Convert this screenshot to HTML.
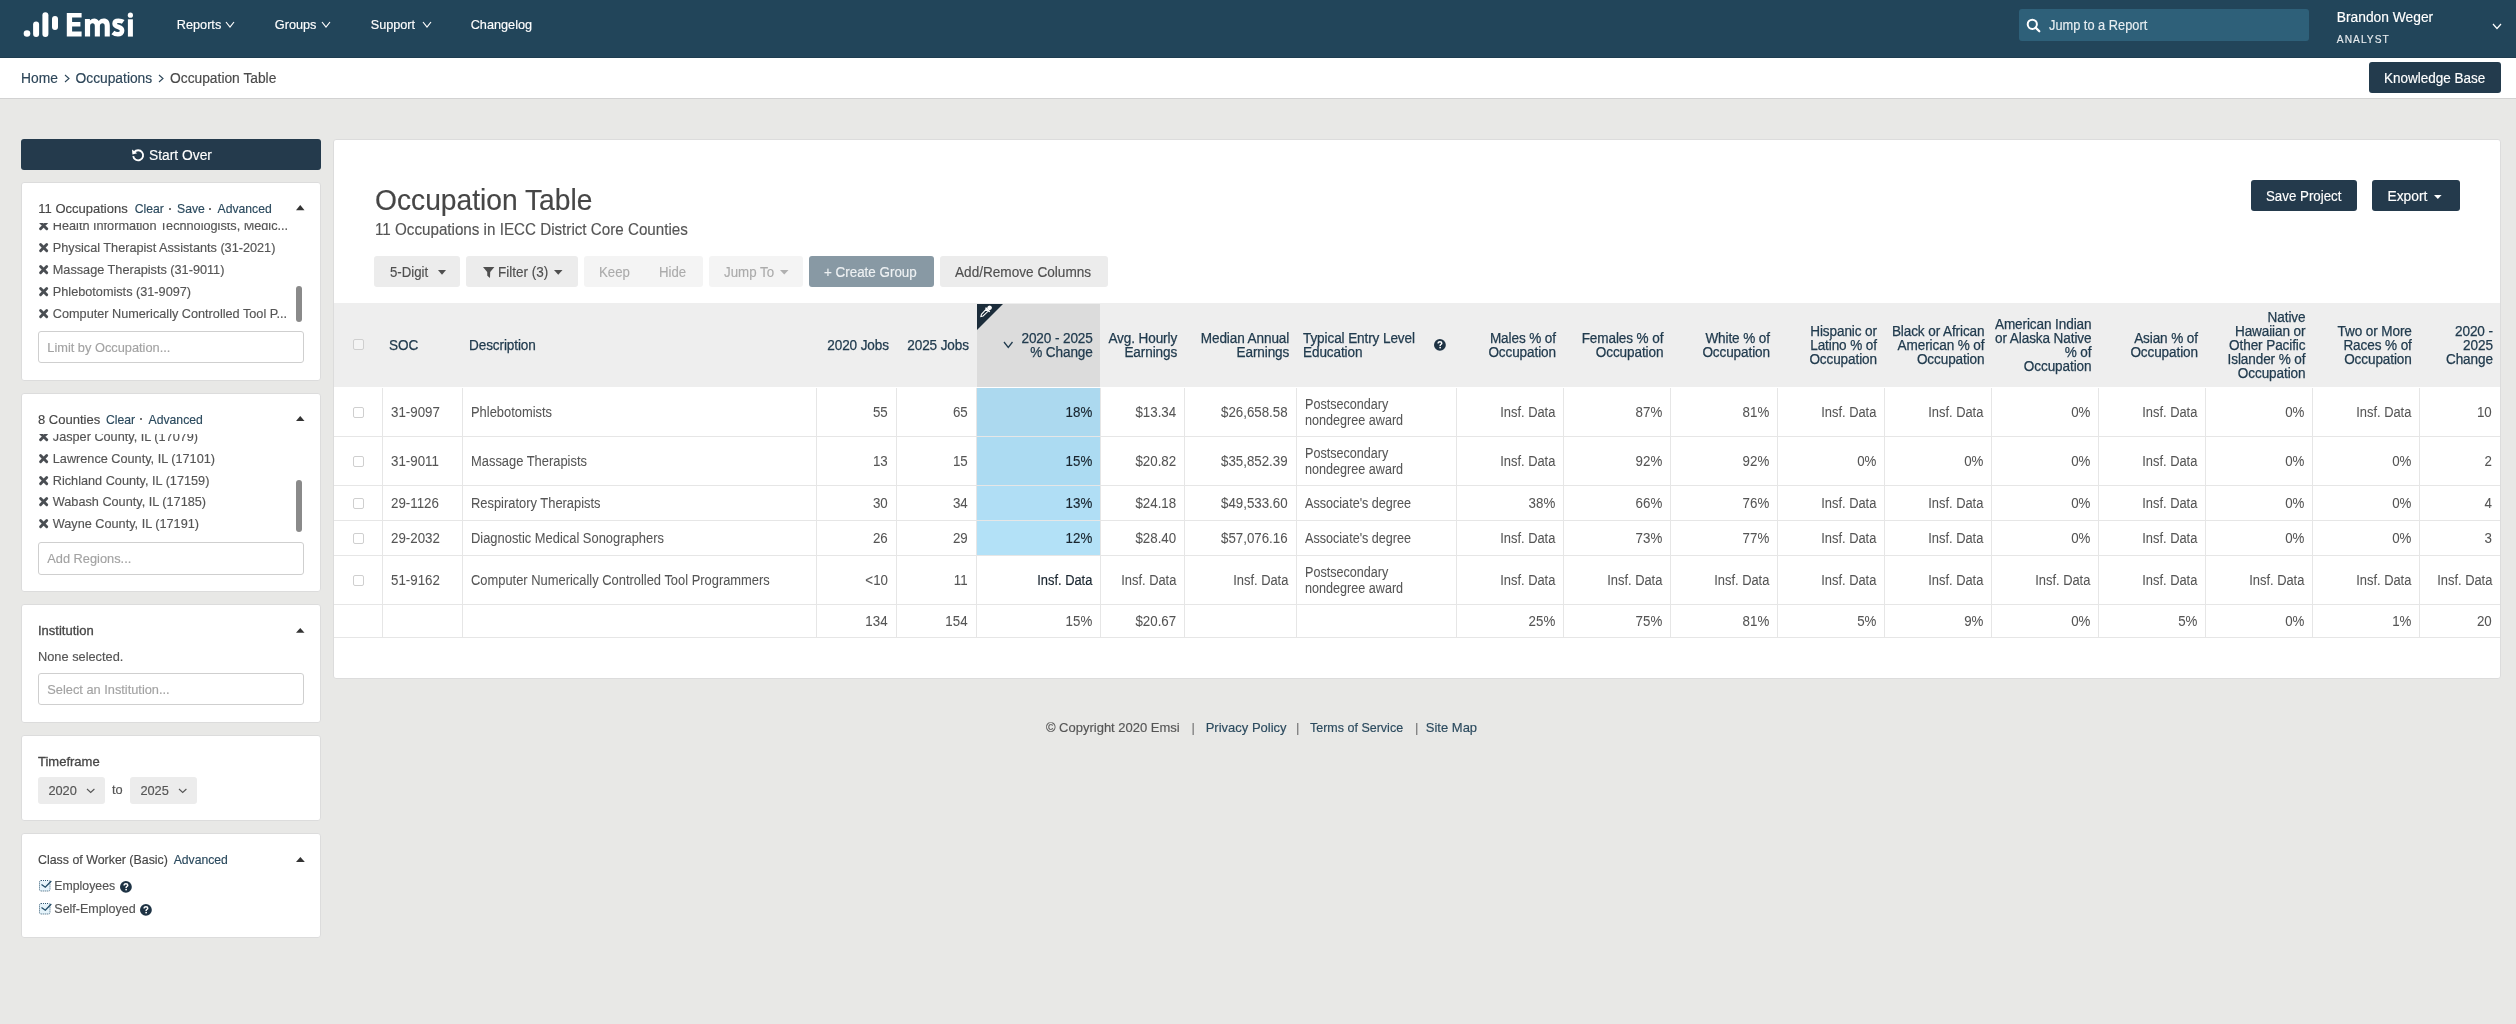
<!DOCTYPE html>
<html><head><meta charset="utf-8"><title>Occupation Table</title>
<style>
html,body{margin:0;padding:0}
body{width:2516px;height:1024px;overflow:hidden;position:relative;background:#e8e8e6;font-family:"Liberation Sans", sans-serif;-webkit-font-smoothing:antialiased}
#wrap{position:absolute;left:0;top:0;width:2516px;height:1024px;will-change:transform}
.t{position:absolute;white-space:pre;-webkit-text-stroke:0.15px currentColor}
.t br{}
.r{position:absolute;}
svg.r{overflow:visible}
</style></head><body>
<div id="wrap">
<div class="r" style="left:0px;top:0px;width:2516px;height:57px;background:#22455a"></div>
<div class="r" style="left:0px;top:57px;width:2516px;height:1px;background:#1e3d50"></div>
<svg class="r" style="left:20px;top:8px" width="120" height="34"><circle cx="7" cy="25.5" r="3.3" fill="#fff"/><rect x="13.1" y="13.5" width="6" height="15.4" rx="3" fill="#fff"/><rect x="22.4" y="4.2" width="6" height="24.7" rx="3" fill="#fff"/><rect x="32" y="8.1" width="6" height="13.8" rx="3" fill="#fff"/></svg>
<svg class="r" style="left:0px;top:0px" width="140" height="45"><path d="M66.8,13 H81.6 V17.6 H72.1 V22.1 H80.4 V26.6 H72.1 V31.4 H81.6 V36.6 H66.8 Z" fill="#fff"/><path d="M84.9,36.6 V18.9 H89.9 V20.6 C91,19.3 92.5,18.6 94.3,18.6 C96.3,18.6 97.8,19.5 98.7,21.1 C99.9,19.4 101.6,18.6 103.7,18.6 C107.6,18.6 109.8,21.1 109.8,25.4 V36.6 H104.7 V26 C104.7,24.2 103.9,23.3 102.5,23.3 C101,23.3 99.9,24.3 99.9,26.1 V36.6 H94.8 V26 C94.8,24.2 94,23.3 92.6,23.3 C91.1,23.3 90.1,24.3 90.1,26.1 V36.6 Z" fill="#fff"/><path d="M123.2,21.9 C121.8,20.9 120.2,20.8 118.4,20.8 C116,20.8 114.6,22 114.6,23.7 C114.6,25.6 116.3,26.3 118.5,27 C121,27.8 122.1,28.9 122.1,30.8 C122.1,33 120.3,34.3 117.9,34.3 C116,34.3 114.3,33.7 112.9,32.5" fill="none" stroke="#fff" stroke-width="4.6"/><rect x="127.9" y="19.3" width="5" height="17.3" fill="#fff"/><circle cx="130.4" cy="15.2" r="2.6" fill="#fff"/></svg>
<div class="t" style="left:176.80px;top:19.00px;font-size:12.7px;line-height:12.7px;color:#ffffff;font-weight:normal;">Reports</div>
<svg class="r" style="left:225px;top:21px" width="10" height="7"><polyline points="1,1 5.0,6 9,1" fill="none" stroke="#fff" stroke-width="1.2"/></svg>
<div class="t" style="left:274.80px;top:19.00px;font-size:12.7px;line-height:12.7px;color:#ffffff;font-weight:normal;">Groups</div>
<svg class="r" style="left:321.4px;top:21px" width="10.0" height="7"><polyline points="1,1 5.0,6 9.0,1" fill="none" stroke="#fff" stroke-width="1.2"/></svg>
<div class="t" style="left:370.70px;top:19.00px;font-size:12.7px;line-height:12.7px;color:#ffffff;font-weight:normal;">Support</div>
<svg class="r" style="left:422px;top:21px" width="10" height="7"><polyline points="1,1 5.0,6 9,1" fill="none" stroke="#fff" stroke-width="1.2"/></svg>
<div class="t" style="left:470.70px;top:19.00px;font-size:12.7px;line-height:12.7px;color:#ffffff;font-weight:normal;">Changelog</div>
<div class="r" style="left:2019px;top:9px;width:290px;height:32px;background:#2e6079;border-radius:3px"></div>
<svg class="r" style="left:2026px;top:18px" width="16" height="16"><circle cx="6.3" cy="6.3" r="4.6" fill="none" stroke="#fff" stroke-width="2"/><line x1="9.6" y1="9.6" x2="13.3" y2="13.3" stroke="#fff" stroke-width="2.2" stroke-linecap="round"/></svg>
<div class="t" style="left:2048.80px;top:19.00px;font-size:13.97px;line-height:13.97px;color:#e8eef2;font-weight:normal;;transform:scaleX(0.9165);transform-origin:left top">Jump to a Report</div>
<div class="t" style="left:2336.80px;top:11.00px;font-size:13.8px;line-height:13.8px;color:#ffffff;font-weight:normal;">Brandon Weger</div>
<div class="t" style="left:2336.80px;top:35.00px;font-size:10.2px;line-height:10.2px;color:#e6ebee;font-weight:normal;letter-spacing:1.05px">ANALYST</div>
<svg class="r" style="left:2492px;top:22.5px" width="10" height="6.5"><polyline points="1,1 5.0,5.5 9,1" fill="none" stroke="#fff" stroke-width="1.2"/></svg>
<div class="r" style="left:0px;top:58px;width:2516px;height:40px;background:#fff"></div>
<div class="r" style="left:0px;top:98px;width:2516px;height:1px;background:#d2d2d2"></div>
<div class="t" style="left:21.00px;top:72.00px;font-size:13.8px;line-height:13.8px;color:#2d4659;font-weight:normal;">Home</div>
<svg class="r" style="left:63.5px;top:73.5px" width="6.0" height="9.0"><polyline points="1,1 5.0,4.5 1,8.0" fill="none" stroke="#2d4659" stroke-width="1.1"/></svg>
<div class="t" style="left:75.50px;top:72.00px;font-size:13.8px;line-height:13.8px;color:#2d4659;font-weight:normal;">Occupations</div>
<svg class="r" style="left:158px;top:73.5px" width="6" height="9.0"><polyline points="1,1 5,4.5 1,8.0" fill="none" stroke="#2d4659" stroke-width="1.1"/></svg>
<div class="t" style="left:170.00px;top:72.00px;font-size:13.8px;line-height:13.8px;color:#4a4a4a;font-weight:normal;">Occupation Table</div>
<div class="r" style="left:2369px;top:62px;width:132px;height:31px;background:#233b4d;border-radius:3px"></div>
<div class="t" style="left:2384.00px;top:71.00px;font-size:14.39px;line-height:14.39px;color:#ffffff;font-weight:normal;;transform:scaleX(0.9384);transform-origin:left top">Knowledge Base</div>
<div class="r" style="left:21px;top:139px;width:300px;height:31px;background:#243a4c;border-radius:3px"></div>
<svg class="r" style="left:131px;top:148px" width="14" height="14" viewBox="0 0 14 14"><path d="M3.2,4.2 A5,5 0 1 1 2.2,8.2" fill="none" stroke="#fff" stroke-width="1.9"/><polygon points="1,1.6 6.2,5.2 1.4,6.6" fill="#fff"/></svg>
<div class="t" style="left:148.50px;top:148.00px;font-size:14.25px;line-height:14.25px;color:#ffffff;font-weight:normal;;transform:scaleX(0.9687);transform-origin:left top">Start Over</div>
<div class="r" style="left:21px;top:182px;width:300px;height:199px;background:#fff;border:1px solid #dcdcdc;border-radius:3px;box-sizing:border-box"></div>
<div class="t" style="left:38.30px;top:202.00px;font-size:13px;line-height:13px;color:#464646;font-weight:normal;">11 Occupations</div>
<div class="t" style="left:134.80px;top:203.00px;font-size:12.2px;line-height:12.2px;color:#2b4a5e;font-weight:normal;">Clear</div>
<div class="r" style="left:169px;top:207.5px;width:2px;height:2.0px;background:#444;border-radius:1px"></div>
<div class="t" style="left:177.00px;top:203.00px;font-size:12.2px;line-height:12.2px;color:#2b4a5e;font-weight:normal;">Save</div>
<div class="r" style="left:209px;top:207.5px;width:2px;height:2.0px;background:#444;border-radius:1px"></div>
<div class="t" style="left:217.50px;top:203.00px;font-size:12.2px;line-height:12.2px;color:#2b4a5e;font-weight:normal;">Advanced</div>
<svg class="r" style="left:295.5px;top:205.3px" width="8.5" height="5.199999999999989"><polygon points="0,5.199999999999989 4.25,0 8.5,5.199999999999989" fill="#333"/></svg>
<div class="r" style="left:22px;top:223px;width:298px;height:100px;overflow:hidden">
<svg class="r" style="left:17px;top:-2.1999999999999993px" width="9.3" height="9.3" viewBox="0 0 10 10"><path d="M1.7,1.7 L8.3,8.3 M8.3,1.7 L1.7,8.3" stroke="#4a4e53" stroke-width="3.1" stroke-linecap="round"/></svg>
<div class="t" style="left:30.80px;top:-3.00px;font-size:12.7px;line-height:12.7px;color:#555;font-weight:normal;">Health Information Technologists, Medic...</div>
<svg class="r" style="left:17px;top:19.8px" width="9.3" height="9.3" viewBox="0 0 10 10"><path d="M1.7,1.7 L8.3,8.3 M8.3,1.7 L1.7,8.3" stroke="#4a4e53" stroke-width="3.1" stroke-linecap="round"/></svg>
<div class="t" style="left:30.80px;top:19.00px;font-size:12.7px;line-height:12.7px;color:#555;font-weight:normal;">Physical Therapist Assistants (31-2021)</div>
<svg class="r" style="left:17px;top:41.8px" width="9.3" height="9.3" viewBox="0 0 10 10"><path d="M1.7,1.7 L8.3,8.3 M8.3,1.7 L1.7,8.3" stroke="#4a4e53" stroke-width="3.1" stroke-linecap="round"/></svg>
<div class="t" style="left:30.80px;top:41.00px;font-size:12.7px;line-height:12.7px;color:#555;font-weight:normal;">Massage Therapists (31-9011)</div>
<svg class="r" style="left:17px;top:63.8px" width="9.3" height="9.3" viewBox="0 0 10 10"><path d="M1.7,1.7 L8.3,8.3 M8.3,1.7 L1.7,8.3" stroke="#4a4e53" stroke-width="3.1" stroke-linecap="round"/></svg>
<div class="t" style="left:30.80px;top:63.00px;font-size:12.7px;line-height:12.7px;color:#555;font-weight:normal;">Phlebotomists (31-9097)</div>
<svg class="r" style="left:17px;top:85.8px" width="9.3" height="9.3" viewBox="0 0 10 10"><path d="M1.7,1.7 L8.3,8.3 M8.3,1.7 L1.7,8.3" stroke="#4a4e53" stroke-width="3.1" stroke-linecap="round"/></svg>
<div class="t" style="left:30.80px;top:85.00px;font-size:12.7px;line-height:12.7px;color:#555;font-weight:normal;">Computer Numerically Controlled Tool P...</div>
</div>
<div class="r" style="left:295.5px;top:285.5px;width:6.5px;height:36.10000000000002px;background:#8a8a8a;border-radius:3px"></div>
<div class="r" style="left:38px;top:330.6px;width:266px;height:32.799999999999955px;background:#fff;border:1px solid #cfcfcf;border-radius:3px;box-sizing:border-box"></div>
<div class="t" style="left:47.30px;top:342.00px;font-size:12.8px;line-height:12.8px;color:#a3a3a3;font-weight:normal;">Limit by Occupation...</div>
<div class="r" style="left:21px;top:393px;width:300px;height:199px;background:#fff;border:1px solid #dcdcdc;border-radius:3px;box-sizing:border-box"></div>
<div class="t" style="left:38.00px;top:413.00px;font-size:13px;line-height:13px;color:#464646;font-weight:normal;">8 Counties</div>
<div class="t" style="left:106.00px;top:414.00px;font-size:12.2px;line-height:12.2px;color:#2b4a5e;font-weight:normal;">Clear</div>
<div class="r" style="left:140px;top:418px;width:2px;height:2px;background:#444;border-radius:1px"></div>
<div class="t" style="left:148.60px;top:414.00px;font-size:12.2px;line-height:12.2px;color:#2b4a5e;font-weight:normal;">Advanced</div>
<svg class="r" style="left:295.5px;top:416.4px" width="8.5" height="5.100000000000023"><polygon points="0,5.100000000000023 4.25,0 8.5,5.100000000000023" fill="#333"/></svg>
<div class="r" style="left:22px;top:434px;width:298px;height:100px;overflow:hidden">
<svg class="r" style="left:17px;top:-2.1999999999999993px" width="9.3" height="9.3" viewBox="0 0 10 10"><path d="M1.7,1.7 L8.3,8.3 M8.3,1.7 L1.7,8.3" stroke="#4a4e53" stroke-width="3.1" stroke-linecap="round"/></svg>
<div class="t" style="left:30.80px;top:-3.00px;font-size:12.7px;line-height:12.7px;color:#555;font-weight:normal;">Jasper County, IL (17079)</div>
<svg class="r" style="left:17px;top:19.8px" width="9.3" height="9.3" viewBox="0 0 10 10"><path d="M1.7,1.7 L8.3,8.3 M8.3,1.7 L1.7,8.3" stroke="#4a4e53" stroke-width="3.1" stroke-linecap="round"/></svg>
<div class="t" style="left:30.80px;top:19.00px;font-size:12.7px;line-height:12.7px;color:#555;font-weight:normal;">Lawrence County, IL (17101)</div>
<svg class="r" style="left:17px;top:41.8px" width="9.3" height="9.3" viewBox="0 0 10 10"><path d="M1.7,1.7 L8.3,8.3 M8.3,1.7 L1.7,8.3" stroke="#4a4e53" stroke-width="3.1" stroke-linecap="round"/></svg>
<div class="t" style="left:30.80px;top:41.00px;font-size:12.7px;line-height:12.7px;color:#555;font-weight:normal;">Richland County, IL (17159)</div>
<svg class="r" style="left:17px;top:62.8px" width="9.3" height="9.3" viewBox="0 0 10 10"><path d="M1.7,1.7 L8.3,8.3 M8.3,1.7 L1.7,8.3" stroke="#4a4e53" stroke-width="3.1" stroke-linecap="round"/></svg>
<div class="t" style="left:30.80px;top:62.00px;font-size:12.7px;line-height:12.7px;color:#555;font-weight:normal;">Wabash County, IL (17185)</div>
<svg class="r" style="left:17px;top:84.8px" width="9.3" height="9.3" viewBox="0 0 10 10"><path d="M1.7,1.7 L8.3,8.3 M8.3,1.7 L1.7,8.3" stroke="#4a4e53" stroke-width="3.1" stroke-linecap="round"/></svg>
<div class="t" style="left:30.80px;top:84.00px;font-size:12.7px;line-height:12.7px;color:#555;font-weight:normal;">Wayne County, IL (17191)</div>
</div>
<div class="r" style="left:295.5px;top:480px;width:6.5px;height:52.39999999999998px;background:#8a8a8a;border-radius:3px"></div>
<div class="r" style="left:38px;top:541.5px;width:266px;height:33.200000000000045px;background:#fff;border:1px solid #cfcfcf;border-radius:3px;box-sizing:border-box"></div>
<div class="t" style="left:47.30px;top:553.00px;font-size:12.8px;line-height:12.8px;color:#a3a3a3;font-weight:normal;">Add Regions...</div>
<div class="r" style="left:21px;top:604px;width:300px;height:119px;background:#fff;border:1px solid #dcdcdc;border-radius:3px;box-sizing:border-box"></div>
<div class="t" style="left:38.00px;top:624.00px;font-size:13px;line-height:13px;color:#464646;font-weight:normal;-webkit-text-stroke:0.3px #464646">Institution</div>
<svg class="r" style="left:295.5px;top:627.8px" width="8.5" height="4.800000000000068"><polygon points="0,4.800000000000068 4.25,0 8.5,4.800000000000068" fill="#333"/></svg>
<div class="t" style="left:38.00px;top:651.00px;font-size:12.8px;line-height:12.8px;color:#555;font-weight:normal;">None selected.</div>
<div class="r" style="left:38px;top:672.6px;width:266px;height:32.60000000000002px;background:#fff;border:1px solid #cfcfcf;border-radius:3px;box-sizing:border-box"></div>
<div class="t" style="left:47.30px;top:684.00px;font-size:12.8px;line-height:12.8px;color:#a3a3a3;font-weight:normal;">Select an Institution...</div>
<div class="r" style="left:21px;top:735px;width:300px;height:86px;background:#fff;border:1px solid #dcdcdc;border-radius:3px;box-sizing:border-box"></div>
<div class="t" style="left:38.00px;top:755.00px;font-size:13px;line-height:13px;color:#464646;font-weight:normal;-webkit-text-stroke:0.3px #464646">Timeframe</div>
<div class="r" style="left:38px;top:777px;width:67px;height:27px;background:#ececec;border-radius:3px"></div>
<div class="t" style="left:48.40px;top:785.00px;font-size:12.8px;line-height:12.8px;color:#555;font-weight:normal;">2020</div>
<svg class="r" style="left:86px;top:787.5px" width="9.400000000000006" height="5.5"><polyline points="1,1 4.700000000000003,4.5 8.400000000000006,1" fill="none" stroke="#555" stroke-width="1.1"/></svg>
<div class="t" style="left:112.00px;top:784.00px;font-size:12.8px;line-height:12.8px;color:#555;font-weight:normal;">to</div>
<div class="r" style="left:130px;top:777px;width:67px;height:27px;background:#ececec;border-radius:3px"></div>
<div class="t" style="left:140.40px;top:785.00px;font-size:12.8px;line-height:12.8px;color:#555;font-weight:normal;">2025</div>
<svg class="r" style="left:178px;top:787.5px" width="9.400000000000006" height="5.5"><polyline points="1,1 4.700000000000003,4.5 8.400000000000006,1" fill="none" stroke="#555" stroke-width="1.1"/></svg>
<div class="r" style="left:21px;top:833px;width:300px;height:105px;background:#fff;border:1px solid #dcdcdc;border-radius:3px;box-sizing:border-box"></div>
<div class="t" style="left:38.00px;top:854.00px;font-size:12.4px;line-height:12.4px;color:#464646;font-weight:normal;">Class of Worker (Basic)</div>
<div class="t" style="left:173.70px;top:854.00px;font-size:12.2px;line-height:12.2px;color:#2b4a5e;font-weight:normal;">Advanced</div>
<svg class="r" style="left:295.5px;top:856.6px" width="8.800000000000011" height="4.899999999999977"><polygon points="0,4.899999999999977 4.400000000000006,0 8.800000000000011,4.899999999999977" fill="#333"/></svg>
<svg class="r" style="left:39px;top:880px" width="13" height="12" viewBox="0 0 13 12"><rect x="0.5" y="0.5" width="10.5" height="10.5" rx="1.5" fill="#e6f4fb" stroke="#1f4a66" stroke-width="0.9" stroke-dasharray="1,1"/><polyline points="2.5,4.5 6.3,7.2 12.3,1" fill="none" stroke="#1f4a66" stroke-width="1.3"/></svg>
<div class="t" style="left:54.30px;top:880.00px;font-size:12.3px;line-height:12.3px;color:#555;font-weight:normal;">Employees</div>
<svg class="r" style="left:119.7px;top:881px" width="11.8" height="11.8" viewBox="0 0 12 12"><circle cx="6" cy="6" r="6" fill="#1e3344"/><path d="M4.2,4.6 C4.2,3.3 5,2.7 6.1,2.7 C7.2,2.7 7.9,3.4 7.9,4.3 C7.9,5.4 6.6,5.6 6.3,6.3 L6.3,7" fill="none" stroke="#fff" stroke-width="1.5"/><rect x="5.45" y="8" width="1.6" height="1.5" fill="#fff"/></svg>
<svg class="r" style="left:39px;top:903px" width="13" height="12" viewBox="0 0 13 12"><rect x="0.5" y="0.5" width="10.5" height="10.5" rx="1.5" fill="#e6f4fb" stroke="#1f4a66" stroke-width="0.9" stroke-dasharray="1,1"/><polyline points="2.5,4.5 6.3,7.2 12.3,1" fill="none" stroke="#1f4a66" stroke-width="1.3"/></svg>
<div class="t" style="left:54.30px;top:903.00px;font-size:12.5px;line-height:12.5px;color:#555;font-weight:normal;">Self-Employed</div>
<svg class="r" style="left:140.4px;top:904px" width="11.8" height="11.8" viewBox="0 0 12 12"><circle cx="6" cy="6" r="6" fill="#1e3344"/><path d="M4.2,4.6 C4.2,3.3 5,2.7 6.1,2.7 C7.2,2.7 7.9,3.4 7.9,4.3 C7.9,5.4 6.6,5.6 6.3,6.3 L6.3,7" fill="none" stroke="#fff" stroke-width="1.5"/><rect x="5.45" y="8" width="1.6" height="1.5" fill="#fff"/></svg>
<div class="r" style="left:333px;top:139px;width:2168px;height:540px;background:#fff;border:1px solid #dcdcdc;border-radius:3px;box-sizing:border-box"></div>
<div class="t" style="left:374.50px;top:185.00px;font-size:29.75px;line-height:29.75px;color:#464646;font-weight:normal;;transform:scaleX(0.9479);transform-origin:left top">Occupation Table</div>
<div class="t" style="left:374.50px;top:221.00px;font-size:16.2px;line-height:16.2px;color:#555;font-weight:normal;;transform:scaleX(0.9382);transform-origin:left top">11 Occupations in IECC District Core Counties</div>
<div class="r" style="left:374px;top:256px;width:86px;height:31px;background:#ececec;border-radius:3px"></div>
<div class="t" style="left:389.50px;top:266.00px;font-size:13.97px;line-height:13.97px;color:#4f4f4f;font-weight:normal;;transform:scaleX(0.9451);transform-origin:left top">5-Digit</div>
<svg class="r" style="left:437.5px;top:270px" width="8.0" height="4.800000000000011"><polygon points="0,0 4.0,4.800000000000011 8.0,0" fill="#4f4f4f"/></svg>
<div class="r" style="left:466px;top:256px;width:112px;height:31px;background:#ececec;border-radius:3px"></div>
<svg class="r" style="left:483px;top:267px" width="12" height="11" viewBox="0 0 12 11"><polygon points="0,0 11.4,0 7.2,5 7,11 4.3,8.8 4.2,5" fill="#4f4f4f"/></svg>
<div class="t" style="left:497.90px;top:266.00px;font-size:13.97px;line-height:13.97px;color:#4f4f4f;font-weight:normal;;transform:scaleX(0.9666);transform-origin:left top">Filter (3)</div>
<svg class="r" style="left:554px;top:270px" width="8.5" height="4.800000000000011"><polygon points="0,0 4.25,4.800000000000011 8.5,0" fill="#4f4f4f"/></svg>
<div class="r" style="left:584px;top:256px;width:119px;height:31px;background:#f4f4f4;border-radius:3px"></div>
<div class="t" style="left:598.70px;top:266.00px;font-size:13.97px;line-height:13.97px;color:#ababab;font-weight:normal;;transform:scaleX(0.9451);transform-origin:left top">Keep</div>
<div class="t" style="left:659.00px;top:266.00px;font-size:13.97px;line-height:13.97px;color:#ababab;font-weight:normal;;transform:scaleX(0.9451);transform-origin:left top">Hide</div>
<div class="r" style="left:709px;top:256px;width:94px;height:31px;background:#f4f4f4;border-radius:3px"></div>
<div class="t" style="left:723.60px;top:266.00px;font-size:13.97px;line-height:13.97px;color:#ababab;font-weight:normal;;transform:scaleX(0.9523);transform-origin:left top">Jump To</div>
<svg class="r" style="left:780px;top:270px" width="8.5" height="4.5"><polygon points="0,0 4.25,4.5 8.5,0" fill="#b0b0b0"/></svg>
<div class="r" style="left:809px;top:256px;width:125px;height:31px;background:#8899a4;border-radius:3px"></div>
<div class="t" style="left:824.40px;top:266.00px;font-size:13.97px;line-height:13.97px;color:#eef1f3;font-weight:normal;;transform:scaleX(0.9594);transform-origin:left top">+ Create Group</div>
<div class="r" style="left:940px;top:256px;width:168px;height:31px;background:#ececec;border-radius:3px"></div>
<div class="t" style="left:954.80px;top:266.00px;font-size:13.97px;line-height:13.97px;color:#4f4f4f;font-weight:normal;;transform:scaleX(0.9738);transform-origin:left top">Add/Remove Columns</div>
<div class="r" style="left:2251px;top:180px;width:106px;height:31px;background:#243a4c;border-radius:3px"></div>
<div class="t" style="left:2266.40px;top:190.00px;font-size:13.97px;line-height:13.97px;color:#ffffff;font-weight:normal;;transform:scaleX(0.9523);transform-origin:left top">Save Project</div>
<div class="r" style="left:2372px;top:180px;width:88px;height:31px;background:#243a4c;border-radius:3px"></div>
<div class="t" style="left:2387.50px;top:190.00px;font-size:13.8px;line-height:13.8px;color:#ffffff;font-weight:normal;">Export</div>
<svg class="r" style="left:2433.6px;top:194.5px" width="7.599999999999909" height="4.0"><polygon points="0,0 3.7999999999999545,4.0 7.599999999999909,0" fill="#fff"/></svg>
<div class="r" style="left:334px;top:303px;width:2166px;height:84px;background:#eeeeee"></div>
<div class="r" style="left:977px;top:304px;width:123px;height:83px;background:#dcdcdc"></div>
<svg class="r" style="left:977px;top:304px" width="26" height="26" viewBox="0 0 26 26"><polygon points="0,0 26,0 0,26" fill="#1b2c3a"/><g transform="translate(8.8,7.6) rotate(45)"><rect x="-2.2" y="-7.6" width="4.4" height="4.6" rx="2" fill="#fff"/><rect x="-3" y="-3.4" width="6" height="1.6" rx="0.5" fill="#fff"/><path d="M-1.4,-1.8 L1.4,-1.8 L1.2,5 L0,7 L-1.2,5 Z" fill="none" stroke="#fff" stroke-width="1"/></g></svg>
<div class="r" style="left:353px;top:339px;width:11px;height:11px;border:1px solid #cfcfcf;border-radius:2px;background:#f4f4f4;box-sizing:border-box"></div>
<div class="t" style="left:389.00px;top:338.00px;font-size:13.83px;line-height:14px;color:#213b4e;font-weight:normal;-webkit-text-stroke:0.25px #213b4e;letter-spacing:-0.1px;transform:scaleX(0.9800);transform-origin:left top">SOC</div>
<div class="t" style="left:469.00px;top:338.00px;font-size:13.83px;line-height:14px;color:#213b4e;font-weight:normal;-webkit-text-stroke:0.25px #213b4e;letter-spacing:-0.1px;transform:scaleX(0.9800);transform-origin:left top">Description</div>
<div class="t" style="right:1627.00px;text-align:right;top:338.00px;font-size:13.83px;line-height:14px;color:#213b4e;font-weight:normal;-webkit-text-stroke:0.25px #213b4e;letter-spacing:-0.1px;transform:scaleX(0.9800);transform-origin:right top">2020 Jobs</div>
<div class="t" style="right:1547.00px;text-align:right;top:338.00px;font-size:13.83px;line-height:14px;color:#213b4e;font-weight:normal;-webkit-text-stroke:0.25px #213b4e;letter-spacing:-0.1px;transform:scaleX(0.9800);transform-origin:right top">2025 Jobs</div>
<div class="t" style="right:1423.00px;text-align:right;top:331.00px;font-size:13.83px;line-height:14px;color:#213b4e;font-weight:normal;-webkit-text-stroke:0.25px #213b4e;letter-spacing:-0.1px;transform:scaleX(0.9800);transform-origin:right top">2020 - 2025<br>% Change</div>
<svg class="r" style="left:1003px;top:341px" width="10.5" height="7.5"><polyline points="1,1 5.25,6.5 9.5,1" fill="none" stroke="#213b4e" stroke-width="1.3"/></svg>
<div class="t" style="right:1339.00px;text-align:right;top:331.00px;font-size:13.83px;line-height:14px;color:#213b4e;font-weight:normal;-webkit-text-stroke:0.25px #213b4e;letter-spacing:-0.1px;transform:scaleX(0.9800);transform-origin:right top">Avg. Hourly<br>Earnings</div>
<div class="t" style="right:1227.00px;text-align:right;top:331.00px;font-size:13.83px;line-height:14px;color:#213b4e;font-weight:normal;-webkit-text-stroke:0.25px #213b4e;letter-spacing:-0.1px;transform:scaleX(0.9800);transform-origin:right top">Median Annual<br>Earnings</div>
<div class="t" style="left:1303.00px;top:331.00px;font-size:13.83px;line-height:14px;color:#213b4e;font-weight:normal;-webkit-text-stroke:0.25px #213b4e;letter-spacing:-0.1px;transform:scaleX(0.9800);transform-origin:left top">Typical Entry Level<br>Education</div>
<svg class="r" style="left:1434px;top:339.4px" width="11.8" height="11.8" viewBox="0 0 12 12"><circle cx="6" cy="6" r="6" fill="#1e3344"/><path d="M4.2,4.6 C4.2,3.3 5,2.7 6.1,2.7 C7.2,2.7 7.9,3.4 7.9,4.3 C7.9,5.4 6.6,5.6 6.3,6.3 L6.3,7" fill="none" stroke="#fff" stroke-width="1.5"/><rect x="5.45" y="8" width="1.6" height="1.5" fill="#fff"/></svg>
<div class="t" style="right:960.00px;text-align:right;top:331.00px;font-size:13.83px;line-height:14px;color:#213b4e;font-weight:normal;-webkit-text-stroke:0.25px #213b4e;letter-spacing:-0.1px;transform:scaleX(0.9800);transform-origin:right top">Males % of<br>Occupation</div>
<div class="t" style="right:853.00px;text-align:right;top:331.00px;font-size:13.83px;line-height:14px;color:#213b4e;font-weight:normal;-webkit-text-stroke:0.25px #213b4e;letter-spacing:-0.1px;transform:scaleX(0.9800);transform-origin:right top">Females % of<br>Occupation</div>
<div class="t" style="right:746.00px;text-align:right;top:331.00px;font-size:13.83px;line-height:14px;color:#213b4e;font-weight:normal;-webkit-text-stroke:0.25px #213b4e;letter-spacing:-0.1px;transform:scaleX(0.9800);transform-origin:right top">White % of<br>Occupation</div>
<div class="t" style="right:639.00px;text-align:right;top:324.00px;font-size:13.83px;line-height:14px;color:#213b4e;font-weight:normal;-webkit-text-stroke:0.25px #213b4e;letter-spacing:-0.1px;transform:scaleX(0.9800);transform-origin:right top">Hispanic or<br>Latino % of<br>Occupation</div>
<div class="t" style="right:532.00px;text-align:right;top:324.00px;font-size:13.83px;line-height:14px;color:#213b4e;font-weight:normal;-webkit-text-stroke:0.25px #213b4e;letter-spacing:-0.1px;transform:scaleX(0.9800);transform-origin:right top">Black or African<br>American % of<br>Occupation</div>
<div class="t" style="right:425.00px;text-align:right;top:317.00px;font-size:13.83px;line-height:14px;color:#213b4e;font-weight:normal;-webkit-text-stroke:0.25px #213b4e;letter-spacing:-0.1px;transform:scaleX(0.9800);transform-origin:right top">American Indian<br>or Alaska Native<br>% of<br>Occupation</div>
<div class="t" style="right:318.00px;text-align:right;top:331.00px;font-size:13.83px;line-height:14px;color:#213b4e;font-weight:normal;-webkit-text-stroke:0.25px #213b4e;letter-spacing:-0.1px;transform:scaleX(0.9800);transform-origin:right top">Asian % of<br>Occupation</div>
<div class="t" style="right:211.00px;text-align:right;top:310.00px;font-size:13.83px;line-height:14px;color:#213b4e;font-weight:normal;-webkit-text-stroke:0.25px #213b4e;letter-spacing:-0.1px;transform:scaleX(0.9800);transform-origin:right top">Native<br>Hawaiian or<br>Other Pacific<br>Islander % of<br>Occupation</div>
<div class="t" style="right:104.00px;text-align:right;top:324.00px;font-size:13.83px;line-height:14px;color:#213b4e;font-weight:normal;-webkit-text-stroke:0.25px #213b4e;letter-spacing:-0.1px;transform:scaleX(0.9800);transform-origin:right top">Two or More<br>Races % of<br>Occupation</div>
<div class="t" style="right:23.00px;text-align:right;top:324.00px;font-size:13.83px;line-height:14px;color:#213b4e;font-weight:normal;-webkit-text-stroke:0.25px #213b4e;letter-spacing:-0.1px;transform:scaleX(0.9800);transform-origin:right top">2020 -<br>2025<br>Change</div>
<div class="r" style="left:334px;top:436px;width:2166px;height:1px;background:#e6e6e6"></div>
<div class="r" style="left:334px;top:485px;width:2166px;height:1px;background:#e6e6e6"></div>
<div class="r" style="left:334px;top:520px;width:2166px;height:1px;background:#e6e6e6"></div>
<div class="r" style="left:334px;top:555px;width:2166px;height:1px;background:#e6e6e6"></div>
<div class="r" style="left:334px;top:604px;width:2166px;height:1px;background:#e6e6e6"></div>
<div class="r" style="left:334px;top:637px;width:2166px;height:1px;background:#e6e6e6"></div>
<div class="r" style="left:334px;top:387px;width:2166px;height:1px;background:#fff"></div>
<div class="r" style="left:382px;top:388px;width:1px;height:249px;background:#e6e6e6"></div>
<div class="r" style="left:462px;top:388px;width:1px;height:249px;background:#e6e6e6"></div>
<div class="r" style="left:816px;top:388px;width:1px;height:249px;background:#e6e6e6"></div>
<div class="r" style="left:896px;top:388px;width:1px;height:249px;background:#e6e6e6"></div>
<div class="r" style="left:976px;top:388px;width:1px;height:249px;background:#e6e6e6"></div>
<div class="r" style="left:1100px;top:388px;width:1px;height:249px;background:#e6e6e6"></div>
<div class="r" style="left:1184px;top:388px;width:1px;height:249px;background:#e6e6e6"></div>
<div class="r" style="left:1296px;top:388px;width:1px;height:249px;background:#e6e6e6"></div>
<div class="r" style="left:1456px;top:388px;width:1px;height:249px;background:#e6e6e6"></div>
<div class="r" style="left:1563px;top:388px;width:1px;height:249px;background:#e6e6e6"></div>
<div class="r" style="left:1670px;top:388px;width:1px;height:249px;background:#e6e6e6"></div>
<div class="r" style="left:1777px;top:388px;width:1px;height:249px;background:#e6e6e6"></div>
<div class="r" style="left:1884px;top:388px;width:1px;height:249px;background:#e6e6e6"></div>
<div class="r" style="left:1991px;top:388px;width:1px;height:249px;background:#e6e6e6"></div>
<div class="r" style="left:2098px;top:388px;width:1px;height:249px;background:#e6e6e6"></div>
<div class="r" style="left:2205px;top:388px;width:1px;height:249px;background:#e6e6e6"></div>
<div class="r" style="left:2312px;top:388px;width:1px;height:249px;background:#e6e6e6"></div>
<div class="r" style="left:2419px;top:388px;width:1px;height:249px;background:#e6e6e6"></div>
<div class="r" style="left:977px;top:388px;width:123px;height:48px;background:#acd9ef"></div>
<div class="r" style="left:977px;top:437px;width:123px;height:48px;background:#acdbf2"></div>
<div class="r" style="left:977px;top:486px;width:123px;height:34px;background:#b0def5"></div>
<div class="r" style="left:977px;top:521px;width:123px;height:34px;background:#b3e1f7"></div>
<div class="r" style="left:353px;top:407px;width:11px;height:11px;border:1px solid #cfcfcf;border-radius:2px;background:#fff;box-sizing:border-box"></div>
<div class="t" style="left:391.00px;top:405.00px;font-size:14.11px;line-height:14.11px;color:#555;font-weight:normal;-webkit-text-stroke:0.05px #555;transform:scaleX(0.9429);transform-origin:left top">31-9097</div>
<div class="t" style="left:471.00px;top:405.00px;font-size:14.11px;line-height:14.11px;color:#555;font-weight:normal;-webkit-text-stroke:0.05px #555;transform:scaleX(0.9145);transform-origin:left top">Phlebotomists</div>
<div class="t" style="right:1628.00px;text-align:right;top:405.00px;font-size:14.11px;line-height:14.11px;color:#555;font-weight:normal;-webkit-text-stroke:0.05px #555;transform:scaleX(0.9429);transform-origin:right top">55</div>
<div class="t" style="right:1548.00px;text-align:right;top:405.00px;font-size:14.11px;line-height:14.11px;color:#555;font-weight:normal;-webkit-text-stroke:0.05px #555;transform:scaleX(0.9429);transform-origin:right top">65</div>
<div class="t" style="right:1424.00px;text-align:right;top:405.00px;font-size:14.11px;line-height:14.11px;color:#18242e;font-weight:normal;-webkit-text-stroke:0.15px #18242e;transform:scaleX(0.9429);transform-origin:right top">18%</div>
<div class="t" style="right:1340.00px;text-align:right;top:405.00px;font-size:14.11px;line-height:14.11px;color:#555;font-weight:normal;-webkit-text-stroke:0.05px #555;transform:scaleX(0.9429);transform-origin:right top">$13.34</div>
<div class="t" style="right:1228.00px;text-align:right;top:405.00px;font-size:14.11px;line-height:14.11px;color:#555;font-weight:normal;-webkit-text-stroke:0.05px #555;transform:scaleX(0.9429);transform-origin:right top">$26,658.58</div>
<div class="t" style="left:1305.00px;top:396.00px;font-size:14.11px;line-height:16px;color:#555;font-weight:normal;-webkit-text-stroke:0.05px #555;transform:scaleX(0.8932);transform-origin:left top">Postsecondary<br>nondegree award</div>
<div class="t" style="right:961.00px;text-align:right;top:405.00px;font-size:14.11px;line-height:14.11px;color:#555;font-weight:normal;-webkit-text-stroke:0.05px #555;transform:scaleX(0.9145);transform-origin:right top">Insf. Data</div>
<div class="t" style="right:854.00px;text-align:right;top:405.00px;font-size:14.11px;line-height:14.11px;color:#555;font-weight:normal;-webkit-text-stroke:0.05px #555;transform:scaleX(0.9429);transform-origin:right top">87%</div>
<div class="t" style="right:747.00px;text-align:right;top:405.00px;font-size:14.11px;line-height:14.11px;color:#555;font-weight:normal;-webkit-text-stroke:0.05px #555;transform:scaleX(0.9429);transform-origin:right top">81%</div>
<div class="t" style="right:640.00px;text-align:right;top:405.00px;font-size:14.11px;line-height:14.11px;color:#555;font-weight:normal;-webkit-text-stroke:0.05px #555;transform:scaleX(0.9145);transform-origin:right top">Insf. Data</div>
<div class="t" style="right:533.00px;text-align:right;top:405.00px;font-size:14.11px;line-height:14.11px;color:#555;font-weight:normal;-webkit-text-stroke:0.05px #555;transform:scaleX(0.9145);transform-origin:right top">Insf. Data</div>
<div class="t" style="right:426.00px;text-align:right;top:405.00px;font-size:14.11px;line-height:14.11px;color:#555;font-weight:normal;-webkit-text-stroke:0.05px #555;transform:scaleX(0.9429);transform-origin:right top">0%</div>
<div class="t" style="right:319.00px;text-align:right;top:405.00px;font-size:14.11px;line-height:14.11px;color:#555;font-weight:normal;-webkit-text-stroke:0.05px #555;transform:scaleX(0.9145);transform-origin:right top">Insf. Data</div>
<div class="t" style="right:212.00px;text-align:right;top:405.00px;font-size:14.11px;line-height:14.11px;color:#555;font-weight:normal;-webkit-text-stroke:0.05px #555;transform:scaleX(0.9429);transform-origin:right top">0%</div>
<div class="t" style="right:105.00px;text-align:right;top:405.00px;font-size:14.11px;line-height:14.11px;color:#555;font-weight:normal;-webkit-text-stroke:0.05px #555;transform:scaleX(0.9145);transform-origin:right top">Insf. Data</div>
<div class="t" style="right:24.00px;text-align:right;top:405.00px;font-size:14.11px;line-height:14.11px;color:#555;font-weight:normal;-webkit-text-stroke:0.05px #555;transform:scaleX(0.9429);transform-origin:right top">10</div>
<div class="r" style="left:353px;top:456px;width:11px;height:11px;border:1px solid #cfcfcf;border-radius:2px;background:#fff;box-sizing:border-box"></div>
<div class="t" style="left:391.00px;top:454.00px;font-size:14.11px;line-height:14.11px;color:#555;font-weight:normal;-webkit-text-stroke:0.05px #555;transform:scaleX(0.9429);transform-origin:left top">31-9011</div>
<div class="t" style="left:471.00px;top:454.00px;font-size:14.11px;line-height:14.11px;color:#555;font-weight:normal;-webkit-text-stroke:0.05px #555;transform:scaleX(0.9145);transform-origin:left top">Massage Therapists</div>
<div class="t" style="right:1628.00px;text-align:right;top:454.00px;font-size:14.11px;line-height:14.11px;color:#555;font-weight:normal;-webkit-text-stroke:0.05px #555;transform:scaleX(0.9429);transform-origin:right top">13</div>
<div class="t" style="right:1548.00px;text-align:right;top:454.00px;font-size:14.11px;line-height:14.11px;color:#555;font-weight:normal;-webkit-text-stroke:0.05px #555;transform:scaleX(0.9429);transform-origin:right top">15</div>
<div class="t" style="right:1424.00px;text-align:right;top:454.00px;font-size:14.11px;line-height:14.11px;color:#18242e;font-weight:normal;-webkit-text-stroke:0.15px #18242e;transform:scaleX(0.9429);transform-origin:right top">15%</div>
<div class="t" style="right:1340.00px;text-align:right;top:454.00px;font-size:14.11px;line-height:14.11px;color:#555;font-weight:normal;-webkit-text-stroke:0.05px #555;transform:scaleX(0.9429);transform-origin:right top">$20.82</div>
<div class="t" style="right:1228.00px;text-align:right;top:454.00px;font-size:14.11px;line-height:14.11px;color:#555;font-weight:normal;-webkit-text-stroke:0.05px #555;transform:scaleX(0.9429);transform-origin:right top">$35,852.39</div>
<div class="t" style="left:1305.00px;top:445.00px;font-size:14.11px;line-height:16px;color:#555;font-weight:normal;-webkit-text-stroke:0.05px #555;transform:scaleX(0.8932);transform-origin:left top">Postsecondary<br>nondegree award</div>
<div class="t" style="right:961.00px;text-align:right;top:454.00px;font-size:14.11px;line-height:14.11px;color:#555;font-weight:normal;-webkit-text-stroke:0.05px #555;transform:scaleX(0.9145);transform-origin:right top">Insf. Data</div>
<div class="t" style="right:854.00px;text-align:right;top:454.00px;font-size:14.11px;line-height:14.11px;color:#555;font-weight:normal;-webkit-text-stroke:0.05px #555;transform:scaleX(0.9429);transform-origin:right top">92%</div>
<div class="t" style="right:747.00px;text-align:right;top:454.00px;font-size:14.11px;line-height:14.11px;color:#555;font-weight:normal;-webkit-text-stroke:0.05px #555;transform:scaleX(0.9429);transform-origin:right top">92%</div>
<div class="t" style="right:640.00px;text-align:right;top:454.00px;font-size:14.11px;line-height:14.11px;color:#555;font-weight:normal;-webkit-text-stroke:0.05px #555;transform:scaleX(0.9429);transform-origin:right top">0%</div>
<div class="t" style="right:533.00px;text-align:right;top:454.00px;font-size:14.11px;line-height:14.11px;color:#555;font-weight:normal;-webkit-text-stroke:0.05px #555;transform:scaleX(0.9429);transform-origin:right top">0%</div>
<div class="t" style="right:426.00px;text-align:right;top:454.00px;font-size:14.11px;line-height:14.11px;color:#555;font-weight:normal;-webkit-text-stroke:0.05px #555;transform:scaleX(0.9429);transform-origin:right top">0%</div>
<div class="t" style="right:319.00px;text-align:right;top:454.00px;font-size:14.11px;line-height:14.11px;color:#555;font-weight:normal;-webkit-text-stroke:0.05px #555;transform:scaleX(0.9145);transform-origin:right top">Insf. Data</div>
<div class="t" style="right:212.00px;text-align:right;top:454.00px;font-size:14.11px;line-height:14.11px;color:#555;font-weight:normal;-webkit-text-stroke:0.05px #555;transform:scaleX(0.9429);transform-origin:right top">0%</div>
<div class="t" style="right:105.00px;text-align:right;top:454.00px;font-size:14.11px;line-height:14.11px;color:#555;font-weight:normal;-webkit-text-stroke:0.05px #555;transform:scaleX(0.9429);transform-origin:right top">0%</div>
<div class="t" style="right:24.00px;text-align:right;top:454.00px;font-size:14.11px;line-height:14.11px;color:#555;font-weight:normal;-webkit-text-stroke:0.05px #555;transform:scaleX(0.9429);transform-origin:right top">2</div>
<div class="r" style="left:353px;top:498px;width:11px;height:11px;border:1px solid #cfcfcf;border-radius:2px;background:#fff;box-sizing:border-box"></div>
<div class="t" style="left:391.00px;top:496.00px;font-size:14.11px;line-height:14.11px;color:#555;font-weight:normal;-webkit-text-stroke:0.05px #555;transform:scaleX(0.9429);transform-origin:left top">29-1126</div>
<div class="t" style="left:471.00px;top:496.00px;font-size:14.11px;line-height:14.11px;color:#555;font-weight:normal;-webkit-text-stroke:0.05px #555;transform:scaleX(0.9145);transform-origin:left top">Respiratory Therapists</div>
<div class="t" style="right:1628.00px;text-align:right;top:496.00px;font-size:14.11px;line-height:14.11px;color:#555;font-weight:normal;-webkit-text-stroke:0.05px #555;transform:scaleX(0.9429);transform-origin:right top">30</div>
<div class="t" style="right:1548.00px;text-align:right;top:496.00px;font-size:14.11px;line-height:14.11px;color:#555;font-weight:normal;-webkit-text-stroke:0.05px #555;transform:scaleX(0.9429);transform-origin:right top">34</div>
<div class="t" style="right:1424.00px;text-align:right;top:496.00px;font-size:14.11px;line-height:14.11px;color:#18242e;font-weight:normal;-webkit-text-stroke:0.15px #18242e;transform:scaleX(0.9429);transform-origin:right top">13%</div>
<div class="t" style="right:1340.00px;text-align:right;top:496.00px;font-size:14.11px;line-height:14.11px;color:#555;font-weight:normal;-webkit-text-stroke:0.05px #555;transform:scaleX(0.9429);transform-origin:right top">$24.18</div>
<div class="t" style="right:1228.00px;text-align:right;top:496.00px;font-size:14.11px;line-height:14.11px;color:#555;font-weight:normal;-webkit-text-stroke:0.05px #555;transform:scaleX(0.9429);transform-origin:right top">$49,533.60</div>
<div class="t" style="left:1305.00px;top:496.00px;font-size:14.11px;line-height:14.11px;color:#555;font-weight:normal;-webkit-text-stroke:0.05px #555;transform:scaleX(0.8932);transform-origin:left top">Associate's degree</div>
<div class="t" style="right:961.00px;text-align:right;top:496.00px;font-size:14.11px;line-height:14.11px;color:#555;font-weight:normal;-webkit-text-stroke:0.05px #555;transform:scaleX(0.9429);transform-origin:right top">38%</div>
<div class="t" style="right:854.00px;text-align:right;top:496.00px;font-size:14.11px;line-height:14.11px;color:#555;font-weight:normal;-webkit-text-stroke:0.05px #555;transform:scaleX(0.9429);transform-origin:right top">66%</div>
<div class="t" style="right:747.00px;text-align:right;top:496.00px;font-size:14.11px;line-height:14.11px;color:#555;font-weight:normal;-webkit-text-stroke:0.05px #555;transform:scaleX(0.9429);transform-origin:right top">76%</div>
<div class="t" style="right:640.00px;text-align:right;top:496.00px;font-size:14.11px;line-height:14.11px;color:#555;font-weight:normal;-webkit-text-stroke:0.05px #555;transform:scaleX(0.9145);transform-origin:right top">Insf. Data</div>
<div class="t" style="right:533.00px;text-align:right;top:496.00px;font-size:14.11px;line-height:14.11px;color:#555;font-weight:normal;-webkit-text-stroke:0.05px #555;transform:scaleX(0.9145);transform-origin:right top">Insf. Data</div>
<div class="t" style="right:426.00px;text-align:right;top:496.00px;font-size:14.11px;line-height:14.11px;color:#555;font-weight:normal;-webkit-text-stroke:0.05px #555;transform:scaleX(0.9429);transform-origin:right top">0%</div>
<div class="t" style="right:319.00px;text-align:right;top:496.00px;font-size:14.11px;line-height:14.11px;color:#555;font-weight:normal;-webkit-text-stroke:0.05px #555;transform:scaleX(0.9145);transform-origin:right top">Insf. Data</div>
<div class="t" style="right:212.00px;text-align:right;top:496.00px;font-size:14.11px;line-height:14.11px;color:#555;font-weight:normal;-webkit-text-stroke:0.05px #555;transform:scaleX(0.9429);transform-origin:right top">0%</div>
<div class="t" style="right:105.00px;text-align:right;top:496.00px;font-size:14.11px;line-height:14.11px;color:#555;font-weight:normal;-webkit-text-stroke:0.05px #555;transform:scaleX(0.9429);transform-origin:right top">0%</div>
<div class="t" style="right:24.00px;text-align:right;top:496.00px;font-size:14.11px;line-height:14.11px;color:#555;font-weight:normal;-webkit-text-stroke:0.05px #555;transform:scaleX(0.9429);transform-origin:right top">4</div>
<div class="r" style="left:353px;top:533px;width:11px;height:11px;border:1px solid #cfcfcf;border-radius:2px;background:#fff;box-sizing:border-box"></div>
<div class="t" style="left:391.00px;top:531.00px;font-size:14.11px;line-height:14.11px;color:#555;font-weight:normal;-webkit-text-stroke:0.05px #555;transform:scaleX(0.9429);transform-origin:left top">29-2032</div>
<div class="t" style="left:471.00px;top:531.00px;font-size:14.11px;line-height:14.11px;color:#555;font-weight:normal;-webkit-text-stroke:0.05px #555;transform:scaleX(0.9145);transform-origin:left top">Diagnostic Medical Sonographers</div>
<div class="t" style="right:1628.00px;text-align:right;top:531.00px;font-size:14.11px;line-height:14.11px;color:#555;font-weight:normal;-webkit-text-stroke:0.05px #555;transform:scaleX(0.9429);transform-origin:right top">26</div>
<div class="t" style="right:1548.00px;text-align:right;top:531.00px;font-size:14.11px;line-height:14.11px;color:#555;font-weight:normal;-webkit-text-stroke:0.05px #555;transform:scaleX(0.9429);transform-origin:right top">29</div>
<div class="t" style="right:1424.00px;text-align:right;top:531.00px;font-size:14.11px;line-height:14.11px;color:#18242e;font-weight:normal;-webkit-text-stroke:0.15px #18242e;transform:scaleX(0.9429);transform-origin:right top">12%</div>
<div class="t" style="right:1340.00px;text-align:right;top:531.00px;font-size:14.11px;line-height:14.11px;color:#555;font-weight:normal;-webkit-text-stroke:0.05px #555;transform:scaleX(0.9429);transform-origin:right top">$28.40</div>
<div class="t" style="right:1228.00px;text-align:right;top:531.00px;font-size:14.11px;line-height:14.11px;color:#555;font-weight:normal;-webkit-text-stroke:0.05px #555;transform:scaleX(0.9429);transform-origin:right top">$57,076.16</div>
<div class="t" style="left:1305.00px;top:531.00px;font-size:14.11px;line-height:14.11px;color:#555;font-weight:normal;-webkit-text-stroke:0.05px #555;transform:scaleX(0.8932);transform-origin:left top">Associate's degree</div>
<div class="t" style="right:961.00px;text-align:right;top:531.00px;font-size:14.11px;line-height:14.11px;color:#555;font-weight:normal;-webkit-text-stroke:0.05px #555;transform:scaleX(0.9145);transform-origin:right top">Insf. Data</div>
<div class="t" style="right:854.00px;text-align:right;top:531.00px;font-size:14.11px;line-height:14.11px;color:#555;font-weight:normal;-webkit-text-stroke:0.05px #555;transform:scaleX(0.9429);transform-origin:right top">73%</div>
<div class="t" style="right:747.00px;text-align:right;top:531.00px;font-size:14.11px;line-height:14.11px;color:#555;font-weight:normal;-webkit-text-stroke:0.05px #555;transform:scaleX(0.9429);transform-origin:right top">77%</div>
<div class="t" style="right:640.00px;text-align:right;top:531.00px;font-size:14.11px;line-height:14.11px;color:#555;font-weight:normal;-webkit-text-stroke:0.05px #555;transform:scaleX(0.9145);transform-origin:right top">Insf. Data</div>
<div class="t" style="right:533.00px;text-align:right;top:531.00px;font-size:14.11px;line-height:14.11px;color:#555;font-weight:normal;-webkit-text-stroke:0.05px #555;transform:scaleX(0.9145);transform-origin:right top">Insf. Data</div>
<div class="t" style="right:426.00px;text-align:right;top:531.00px;font-size:14.11px;line-height:14.11px;color:#555;font-weight:normal;-webkit-text-stroke:0.05px #555;transform:scaleX(0.9429);transform-origin:right top">0%</div>
<div class="t" style="right:319.00px;text-align:right;top:531.00px;font-size:14.11px;line-height:14.11px;color:#555;font-weight:normal;-webkit-text-stroke:0.05px #555;transform:scaleX(0.9145);transform-origin:right top">Insf. Data</div>
<div class="t" style="right:212.00px;text-align:right;top:531.00px;font-size:14.11px;line-height:14.11px;color:#555;font-weight:normal;-webkit-text-stroke:0.05px #555;transform:scaleX(0.9429);transform-origin:right top">0%</div>
<div class="t" style="right:105.00px;text-align:right;top:531.00px;font-size:14.11px;line-height:14.11px;color:#555;font-weight:normal;-webkit-text-stroke:0.05px #555;transform:scaleX(0.9429);transform-origin:right top">0%</div>
<div class="t" style="right:24.00px;text-align:right;top:531.00px;font-size:14.11px;line-height:14.11px;color:#555;font-weight:normal;-webkit-text-stroke:0.05px #555;transform:scaleX(0.9429);transform-origin:right top">3</div>
<div class="r" style="left:353px;top:575px;width:11px;height:11px;border:1px solid #cfcfcf;border-radius:2px;background:#fff;box-sizing:border-box"></div>
<div class="t" style="left:391.00px;top:573.00px;font-size:14.11px;line-height:14.11px;color:#555;font-weight:normal;-webkit-text-stroke:0.05px #555;transform:scaleX(0.9429);transform-origin:left top">51-9162</div>
<div class="t" style="left:471.00px;top:573.00px;font-size:14.11px;line-height:14.11px;color:#555;font-weight:normal;-webkit-text-stroke:0.05px #555;transform:scaleX(0.9145);transform-origin:left top">Computer Numerically Controlled Tool Programmers</div>
<div class="t" style="right:1628.00px;text-align:right;top:573.00px;font-size:14.11px;line-height:14.11px;color:#555;font-weight:normal;-webkit-text-stroke:0.05px #555;transform:scaleX(0.9429);transform-origin:right top">&lt;10</div>
<div class="t" style="right:1548.00px;text-align:right;top:573.00px;font-size:14.11px;line-height:14.11px;color:#555;font-weight:normal;-webkit-text-stroke:0.05px #555;transform:scaleX(0.9429);transform-origin:right top">11</div>
<div class="t" style="right:1424.00px;text-align:right;top:573.00px;font-size:14.11px;line-height:14.11px;color:#18242e;font-weight:normal;-webkit-text-stroke:0.15px #18242e;transform:scaleX(0.9145);transform-origin:right top">Insf. Data</div>
<div class="t" style="right:1340.00px;text-align:right;top:573.00px;font-size:14.11px;line-height:14.11px;color:#555;font-weight:normal;-webkit-text-stroke:0.05px #555;transform:scaleX(0.9145);transform-origin:right top">Insf. Data</div>
<div class="t" style="right:1228.00px;text-align:right;top:573.00px;font-size:14.11px;line-height:14.11px;color:#555;font-weight:normal;-webkit-text-stroke:0.05px #555;transform:scaleX(0.9145);transform-origin:right top">Insf. Data</div>
<div class="t" style="left:1305.00px;top:564.00px;font-size:14.11px;line-height:16px;color:#555;font-weight:normal;-webkit-text-stroke:0.05px #555;transform:scaleX(0.8932);transform-origin:left top">Postsecondary<br>nondegree award</div>
<div class="t" style="right:961.00px;text-align:right;top:573.00px;font-size:14.11px;line-height:14.11px;color:#555;font-weight:normal;-webkit-text-stroke:0.05px #555;transform:scaleX(0.9145);transform-origin:right top">Insf. Data</div>
<div class="t" style="right:854.00px;text-align:right;top:573.00px;font-size:14.11px;line-height:14.11px;color:#555;font-weight:normal;-webkit-text-stroke:0.05px #555;transform:scaleX(0.9145);transform-origin:right top">Insf. Data</div>
<div class="t" style="right:747.00px;text-align:right;top:573.00px;font-size:14.11px;line-height:14.11px;color:#555;font-weight:normal;-webkit-text-stroke:0.05px #555;transform:scaleX(0.9145);transform-origin:right top">Insf. Data</div>
<div class="t" style="right:640.00px;text-align:right;top:573.00px;font-size:14.11px;line-height:14.11px;color:#555;font-weight:normal;-webkit-text-stroke:0.05px #555;transform:scaleX(0.9145);transform-origin:right top">Insf. Data</div>
<div class="t" style="right:533.00px;text-align:right;top:573.00px;font-size:14.11px;line-height:14.11px;color:#555;font-weight:normal;-webkit-text-stroke:0.05px #555;transform:scaleX(0.9145);transform-origin:right top">Insf. Data</div>
<div class="t" style="right:426.00px;text-align:right;top:573.00px;font-size:14.11px;line-height:14.11px;color:#555;font-weight:normal;-webkit-text-stroke:0.05px #555;transform:scaleX(0.9145);transform-origin:right top">Insf. Data</div>
<div class="t" style="right:319.00px;text-align:right;top:573.00px;font-size:14.11px;line-height:14.11px;color:#555;font-weight:normal;-webkit-text-stroke:0.05px #555;transform:scaleX(0.9145);transform-origin:right top">Insf. Data</div>
<div class="t" style="right:212.00px;text-align:right;top:573.00px;font-size:14.11px;line-height:14.11px;color:#555;font-weight:normal;-webkit-text-stroke:0.05px #555;transform:scaleX(0.9145);transform-origin:right top">Insf. Data</div>
<div class="t" style="right:105.00px;text-align:right;top:573.00px;font-size:14.11px;line-height:14.11px;color:#555;font-weight:normal;-webkit-text-stroke:0.05px #555;transform:scaleX(0.9145);transform-origin:right top">Insf. Data</div>
<div class="t" style="right:24.00px;text-align:right;top:573.00px;font-size:14.11px;line-height:14.11px;color:#555;font-weight:normal;-webkit-text-stroke:0.05px #555;transform:scaleX(0.9145);transform-origin:right top">Insf. Data</div>
<div class="t" style="right:1628.00px;text-align:right;top:614.00px;font-size:14.11px;line-height:14.11px;color:#555;font-weight:normal;-webkit-text-stroke:0.05px #555;transform:scaleX(0.9429);transform-origin:right top">134</div>
<div class="t" style="right:1548.00px;text-align:right;top:614.00px;font-size:14.11px;line-height:14.11px;color:#555;font-weight:normal;-webkit-text-stroke:0.05px #555;transform:scaleX(0.9429);transform-origin:right top">154</div>
<div class="t" style="right:1424.00px;text-align:right;top:614.00px;font-size:14.11px;line-height:14.11px;color:#555;font-weight:normal;-webkit-text-stroke:0.05px #555;transform:scaleX(0.9429);transform-origin:right top">15%</div>
<div class="t" style="right:1340.00px;text-align:right;top:614.00px;font-size:14.11px;line-height:14.11px;color:#555;font-weight:normal;-webkit-text-stroke:0.05px #555;transform:scaleX(0.9429);transform-origin:right top">$20.67</div>
<div class="t" style="right:961.00px;text-align:right;top:614.00px;font-size:14.11px;line-height:14.11px;color:#555;font-weight:normal;-webkit-text-stroke:0.05px #555;transform:scaleX(0.9429);transform-origin:right top">25%</div>
<div class="t" style="right:854.00px;text-align:right;top:614.00px;font-size:14.11px;line-height:14.11px;color:#555;font-weight:normal;-webkit-text-stroke:0.05px #555;transform:scaleX(0.9429);transform-origin:right top">75%</div>
<div class="t" style="right:747.00px;text-align:right;top:614.00px;font-size:14.11px;line-height:14.11px;color:#555;font-weight:normal;-webkit-text-stroke:0.05px #555;transform:scaleX(0.9429);transform-origin:right top">81%</div>
<div class="t" style="right:640.00px;text-align:right;top:614.00px;font-size:14.11px;line-height:14.11px;color:#555;font-weight:normal;-webkit-text-stroke:0.05px #555;transform:scaleX(0.9429);transform-origin:right top">5%</div>
<div class="t" style="right:533.00px;text-align:right;top:614.00px;font-size:14.11px;line-height:14.11px;color:#555;font-weight:normal;-webkit-text-stroke:0.05px #555;transform:scaleX(0.9429);transform-origin:right top">9%</div>
<div class="t" style="right:426.00px;text-align:right;top:614.00px;font-size:14.11px;line-height:14.11px;color:#555;font-weight:normal;-webkit-text-stroke:0.05px #555;transform:scaleX(0.9429);transform-origin:right top">0%</div>
<div class="t" style="right:319.00px;text-align:right;top:614.00px;font-size:14.11px;line-height:14.11px;color:#555;font-weight:normal;-webkit-text-stroke:0.05px #555;transform:scaleX(0.9429);transform-origin:right top">5%</div>
<div class="t" style="right:212.00px;text-align:right;top:614.00px;font-size:14.11px;line-height:14.11px;color:#555;font-weight:normal;-webkit-text-stroke:0.05px #555;transform:scaleX(0.9429);transform-origin:right top">0%</div>
<div class="t" style="right:105.00px;text-align:right;top:614.00px;font-size:14.11px;line-height:14.11px;color:#555;font-weight:normal;-webkit-text-stroke:0.05px #555;transform:scaleX(0.9429);transform-origin:right top">1%</div>
<div class="t" style="right:24.00px;text-align:right;top:614.00px;font-size:14.11px;line-height:14.11px;color:#555;font-weight:normal;-webkit-text-stroke:0.05px #555;transform:scaleX(0.9429);transform-origin:right top">20</div>
<div class="t" style="left:1045.90px;top:721.00px;font-size:13px;line-height:13px;color:#555;font-weight:normal;">© Copyright 2020 Emsi</div>
<div class="t" style="left:1191.50px;top:721.00px;font-size:13px;line-height:13px;color:#777;font-weight:normal;">|</div>
<div class="t" style="left:1205.70px;top:721.00px;font-size:13px;line-height:13px;color:#2b4a5e;font-weight:normal;">Privacy Policy</div>
<div class="t" style="left:1296.00px;top:721.00px;font-size:13px;line-height:13px;color:#777;font-weight:normal;">|</div>
<div class="t" style="left:1310.00px;top:722.00px;font-size:12.5px;line-height:12.5px;color:#2b4a5e;font-weight:normal;">Terms of Service</div>
<div class="t" style="left:1415.00px;top:721.00px;font-size:13px;line-height:13px;color:#777;font-weight:normal;">|</div>
<div class="t" style="left:1425.80px;top:721.00px;font-size:13px;line-height:13px;color:#2b4a5e;font-weight:normal;">Site Map</div>
</div>
</body></html>
